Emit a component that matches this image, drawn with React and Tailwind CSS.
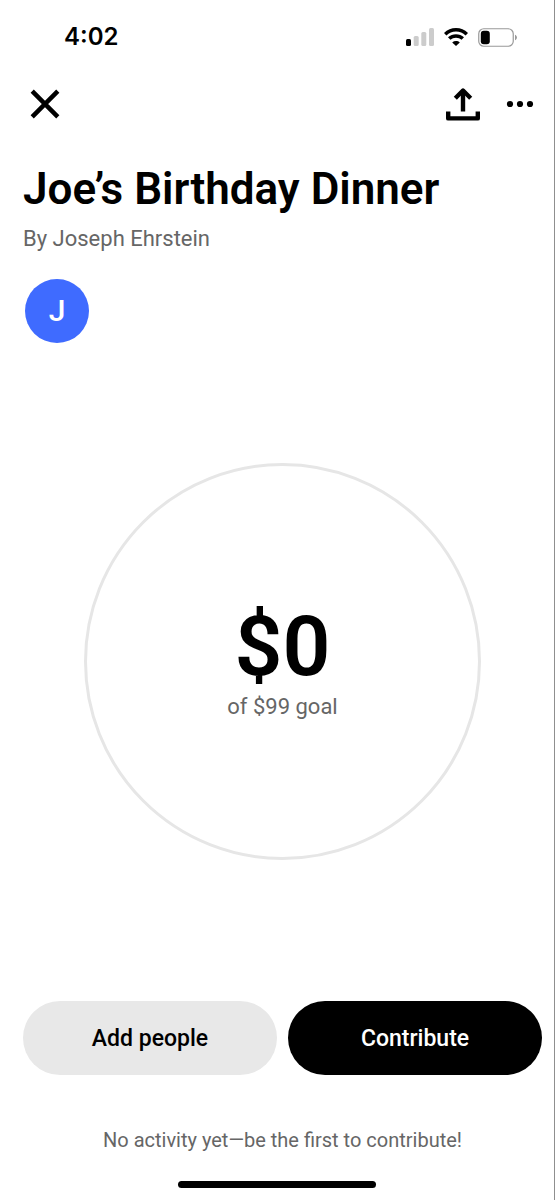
const people = [{ name: "Joseph Ehrstein", initial: "J" }];

function SignalIcon() {
  return (
    <svg width="28" height="18" viewBox="0 0 28 18">
      <rect x="0" y="11" width="5" height="7" rx="1.5" fill="#000" />
      <rect x="7.7" y="8" width="5" height="10" rx="1.5" fill="#ccc" />
      <rect x="15.3" y="4" width="5" height="14" rx="1.5" fill="#ccc" />
      <rect x="23" y="0" width="5" height="18" rx="1.5" fill="#ccc" />
    </svg>
  );
}

function WifiIcon() {
  return (
    <svg width="24" height="18" viewBox="0 0 24 18" fill="none" stroke="#000" strokeWidth="3.5">
      <path d="M1.2 6.2C7.2 0.3 16.8 0.3 22.8 6.2" />
      <path d="M5.2 10.6C9 7 15 7 18.8 10.6" />
      <path d="M12 18L8.2 14.4C10.4 12.6 13.6 12.6 15.8 14.4Z" fill="#000" stroke="none" />
    </svg>
  );
}

function BatteryIcon() {
  return (
    <svg width="40" height="19" viewBox="0 0 40 19">
      <rect x="0.75" y="0.75" width="34.5" height="17.5" rx="5" fill="none" stroke="#999" strokeWidth="1.2" />
      <rect x="2.8" y="2.8" width="9" height="13.4" rx="3" fill="#000" />
      <path d="M37 6.8C39.6 7.8 39.6 11.2 37 12.2Z" fill="#999" />
    </svg>
  );
}

function StatusBar() {
  return (
    <div className="flex h-[74px] items-center justify-between pl-16 pr-9">
      <span className="font-[Inter,sans-serif] text-2xl font-semibold">4:02</span>
      <div className="flex items-center gap-2.5">
        <SignalIcon />
        <WifiIcon />
        <BatteryIcon />
      </div>
    </div>
  );
}

function NavBar() {
  return (
    <nav className="flex h-[60px] items-center justify-between pl-[30px] pr-[20px]">
      <button type="button" aria-label="Close">
        <svg width="30" height="30" viewBox="0 0 30 30" fill="none" stroke="#000" strokeWidth="4.5">
          <path d="M2.2 2.2L27.8 27.8M27.8 2.2L2.2 27.8" />
        </svg>
      </button>
      <div className="flex items-center gap-[26px]">
        <button type="button" aria-label="Share">
          <svg width="34" height="34" viewBox="0 0 34 34" fill="none" stroke="#000" strokeWidth="4.4">
            <path d="M17 24.5V4" />
            <path d="M9.3 11.2L17 3.5L24.7 11.2" strokeLinejoin="round" />
            <path d="M2.2 24.5V31.4H31.8V24.5" strokeLinejoin="round" />
          </svg>
        </button>
        <button type="button" aria-label="More options">
          <svg width="28" height="8" viewBox="0 0 28 8">
            <circle cx="4" cy="4" r="3.1" />
            <circle cx="14" cy="4" r="3.1" />
            <circle cx="24" cy="4" r="3.1" />
          </svg>
        </button>
      </div>
    </nav>
  );
}

function App() {
  return (
    <div className="flex min-h-screen flex-col border-r border-[#8f8f8f] bg-white font-[Roboto,sans-serif] text-black">
      <StatusBar />
      <NavBar />

      <main className="flex flex-1 flex-col pl-[23px] pr-3 pt-[27px]">
        <h1 className="text-[44px] font-semibold leading-[56px]">Joe’s Birthday Dinner</h1>
        <p className="mt-1.5 text-[22px] leading-8 text-[#666]">By Joseph Ehrstein</p>

        <div className="ml-0.5 mt-6 flex gap-2">
          {people.map((person) => (
            <span key={person.name} title={person.name}
              className="flex size-16 items-center justify-center rounded-full bg-[#3f6bff] text-3xl font-medium text-white">
              {person.initial}
            </span>
          ))}
        </div>

        <div className="flex flex-1 items-center justify-center pb-[21px]">
          <div className="flex aspect-square w-full max-w-[397px] flex-col items-center justify-center rounded-full border-3 border-[#e6e6e6] pb-1.5">
            <span className="text-[84px] font-semibold leading-[96px]">$0</span>
            <span className="text-[22px] leading-6 text-[#666]">of $99 goal</span>
          </div>
        </div>

        <div className="grid grid-cols-2 gap-[11px]">
          <button type="button" className="h-[74px] rounded-full bg-[#e8e8e8] pt-[3px] text-[23px] font-medium">
            Add people
          </button>
          <button type="button" className="h-[74px] rounded-full bg-black pt-[3px] text-[23px] font-medium text-white">
            Contribute
          </button>
        </div>

        <p className="mt-[49px] text-center text-xl leading-8 text-[#666]">
          No activity yet—be the first to contribute!
        </p>
      </main>

      <div className="flex justify-center pb-3 pt-[25px]">
        <div className="h-[7px] w-[198px] rounded-full bg-black" />
      </div>
    </div>
  );
}

export default App;
